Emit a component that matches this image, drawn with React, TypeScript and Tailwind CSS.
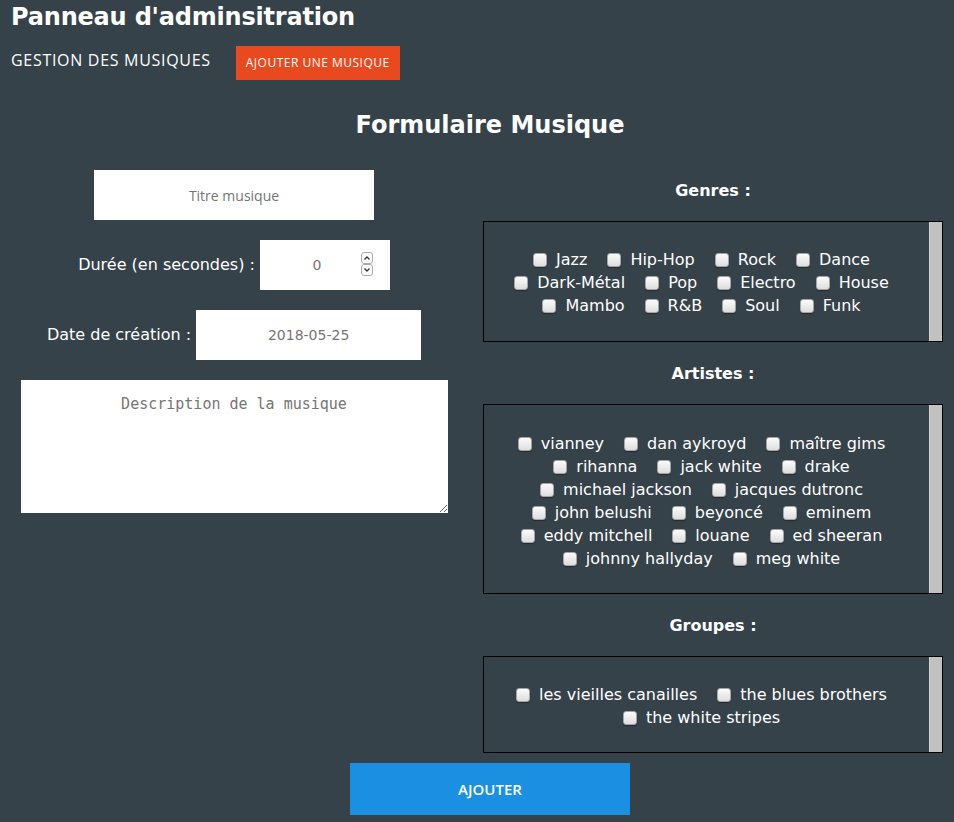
import React from 'react';

const GENRES = ['Jazz', 'Hip-Hop', 'Rock', 'Dance', 'Dark-Métal', 'Pop', 'Electro', 'House', 'Mambo', 'R&B', 'Soul', 'Funk'];

const ARTISTES = [
  'vianney', 'dan aykroyd', 'maître gims', 'rihanna', 'jack white', 'drake',
  'michael jackson', 'jacques dutronc', 'john belushi', 'beyoncé', 'eminem',
  'eddy mitchell', 'louane', 'ed sheeran', 'johnny hallyday', 'meg white',
];

const GROUPES = ['les vieilles canailles', 'the blues brothers', 'the white stripes'];

const Check: React.FC<{ label: string }> = ({ label }) => (
  <span className="inline-flex items-center">
    <span className="w-[14px] h-[14px] rounded-[3px] border border-[#a5a5a5] bg-linear-to-b from-[#fbfbfb] to-[#dedede] shadow-[0_1px_1px_rgba(0,0,0,0.35)]" />
    <span className="ml-[9px]">{label}</span>
  </span>
);

const CheckBox: React.FC<{ title: string; items: string[]; pad: string }> = ({ title, items, pad }) => (
  <>
    <div className="h-[62px] flex items-center justify-center font-bold text-[16px] pt-[1px]">{title}</div>
    <div className="flex border border-black">
      <div className={`flex-1 ${pad} pr-[10px] flex flex-wrap justify-center gap-x-[20px] leading-[23px] text-[16px]`}>
        {items.map(it => (
          <Check key={it} label={it} />
        ))}
      </div>
      <div className="w-[13px] bg-[#c1c1c1] border-l border-[#d0d0d0]" />
    </div>
  </>
);

export default function App() {
  return (
    <div className="min-h-screen bg-[#36424a] text-white font-['DejaVu_Sans',sans-serif]">
      {/* Header */}
      <h1 className="pl-[11px] pt-[3px] text-[24px] leading-[28px] font-bold tracking-[-0.2px]">Panneau d'adminsitration</h1>
      <nav className="mt-[15px] pl-[11px] flex items-start h-[34px]">
        <span className="mt-[3px] font-['Open_Sans',sans-serif] text-[16px] leading-[22px] tracking-[0.7px]">GESTION DES MUSIQUES</span>
        <button className="ml-[25px] h-[34px] px-[10px] bg-[#e8491f] font-['Open_Sans',sans-serif] text-[12px] tracking-[0.5px] text-white flex items-center">
          AJOUTER UNE MUSIQUE
        </button>
      </nav>

      <h2 className="mt-[31px] pl-[26px] text-center text-[24px] leading-[28px] font-bold">Formulaire Musique</h2>

      <form className="mt-[20px] flex">
        {/* Left column */}
        <div className="w-[468px] pt-[11px] flex flex-col items-center gap-[20px]">
          <input
            type="text"
            placeholder="Titre musique"
            className="w-[280px] h-[50px] bg-white text-center font-['Open_Sans',sans-serif] text-[14px] text-[#333] placeholder:text-[#757575] outline-none"
          />
          <div className="flex items-center gap-[5px] text-[16px]">
            <span>Durée (en secondes) :</span>
            <div className="relative w-[130px] h-[50px] bg-white flex items-center pr-[16px]">
              <span className="flex-1 text-center text-[14px] text-[#757575]">0</span>
              <span className="absolute right-[17px] top-[12px] flex flex-col">
                <span className="w-[12px] h-[12px] rounded-[3px] border border-[#aaa] flex items-center justify-center">
                  <svg width="8" height="6" viewBox="0 0 8 6" fill="none" stroke="#333" strokeWidth="1.3">
                    <path d="M1.5 4.5 L4 2 L6.5 4.5" />
                  </svg>
                </span>
                <span className="w-[12px] h-[12px] rounded-[3px] border border-[#aaa] flex items-center justify-center">
                  <svg width="8" height="6" viewBox="0 0 8 6" fill="none" stroke="#333" strokeWidth="1.3">
                    <path d="M1.5 1.5 L4 4 L6.5 1.5" />
                  </svg>
                </span>
              </span>
            </div>
          </div>
          <div className="flex items-center gap-[5px] text-[16px]">
            <span>Date de création :</span>
            <div className="w-[225px] h-[50px] bg-white flex items-center justify-center text-[14px] text-[#757575]">
              2018-05-25
            </div>
          </div>
          <textarea
            placeholder="Description de la musique"
            className="w-[427px] h-[133px] bg-white pt-[13px] text-center font-['DejaVu_Sans_Mono',monospace] text-[15px] text-[#333] placeholder:text-[#757575] outline-none"
          />
        </div>

        {/* Right column */}
        <div className="ml-[15px] w-[460px]">
          <CheckBox title="Genres :" items={GENRES} pad="pt-[26px] pb-[24px]" />
          <CheckBox title="Artistes :" items={ARTISTES} pad="pt-[27px] pb-[23px]" />
          <CheckBox title="Groupes :" items={GROUPES} pad="pt-[26px] pb-[23px]" />
        </div>
      </form>

      <div className="mt-[10px] pl-[26px] flex justify-center">
        <button className="w-[280px] h-[52px] bg-[#1b8fe1] font-['Open_Sans',sans-serif] font-semibold text-[15px] text-white">
          AJOUTER
        </button>
      </div>
    </div>
  );
}
